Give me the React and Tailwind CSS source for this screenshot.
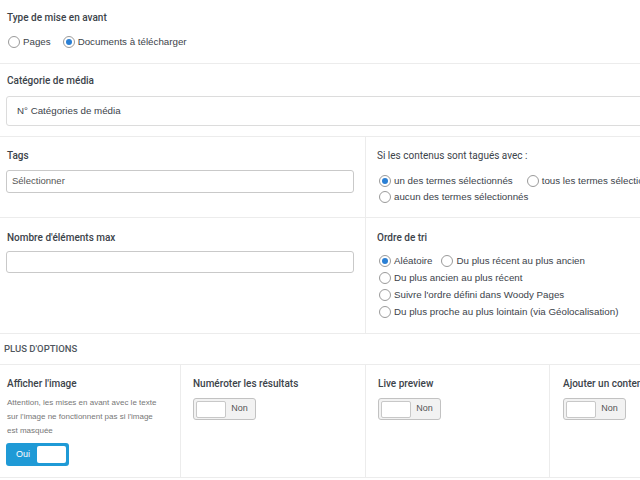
const font = { fontFamily: '"Liberation Sans", Arial, sans-serif' };
const labelFont = { fontFamily: 'Roboto, "Liberation Sans", Arial, sans-serif' };

const Radio = ({ checked, label }) => (
  <label className="flex items-center gap-[3px] text-[9.75px] text-[#3c434a] leading-[14px]">
    <span className="w-[12px] h-[12px] rounded-full border border-[#9a9a9a] bg-white flex items-center justify-center shrink-0">
      {checked && <span className="w-[6px] h-[6px] rounded-full bg-[#2a7fd4]" />}
    </span>
    <span className="whitespace-nowrap">{label}</span>
  </label>
);

const Label = ({ children, className = "" }) => (
  <div
    className={`text-[10px] font-medium text-[#3c434a] leading-[14px] whitespace-nowrap ${className}`}
    style={labelFont}
  >
    {children}
  </div>
);

const ToggleOff = () => (
  <div className="w-[63px] h-[22px] rounded-[3px] border border-[#c2c2c2] bg-[#f2f2f2] flex items-center p-[2px]">
    <div className="w-[30px] h-[17px] bg-white border border-[#c8c8c8] rounded-[2px]" />
    <span className="flex-1 text-center text-[9px] text-[#555]">Non</span>
  </div>
);

const ToggleOn = () => (
  <div className="w-[63px] h-[23px] rounded-[3px] bg-[#1f9ad6] flex items-center p-[3px]">
    <span className="flex-1 text-center text-[9px] text-white">Oui</span>
    <div className="w-[29px] h-[17px] bg-white rounded-[2px]" />
  </div>
);

export default function App() {
  return (
    <div className="w-[640px] h-[480px] overflow-hidden bg-white" style={font}>
      <div className="w-[740px]">
        {/* Type */}
        <div className="h-[64px] px-[7px] pt-[11px] border-b border-[#ececec]">
          <Label>Type de mise en avant</Label>
          <div className="flex gap-[12px] mt-[10px] pl-[1px]">
            <Radio label="Pages" />
            <Radio checked label="Documents à télécharger" />
          </div>
        </div>

        {/* Catégorie */}
        <div className="h-[73px] pl-[6px] pt-[10px] border-b border-[#ececec]">
          <Label className="pl-[1px]">Catégorie de média</Label>
          <div className="mt-[8px] h-[30px] border border-[#dcdcdc] rounded-[3px] flex items-center pl-[10px] text-[9.75px] text-[#3c434a]">
            N° Catégories de média
          </div>
        </div>

        {/* Tags */}
        <div className="flex h-[81px] border-b border-[#ececec]">
          <div className="w-[366px] pl-[6px] pr-[11px] pt-[12px] border-r border-[#ececec]">
            <Label className="pl-[1px]">Tags</Label>
            <div className="mt-[7px] h-[23px] border border-[#c9c9c9] rounded-[3px] flex items-center pl-[5px] text-[9.5px] text-[#555]">
              Sélectionner
            </div>
          </div>
          <div className="flex-1 pl-[11px] pt-[12px]">
            <Label className="font-normal">Si les contenus sont tagués avec :</Label>
            <div className="mt-[11px] pl-[2px] flex flex-col gap-[2px]">
              <div className="flex gap-[14px]">
                <Radio checked label="un des termes sélectionnés" />
                <Radio label="tous les termes sélectionnés" />
              </div>
              <Radio label="aucun des termes sélectionnés" />
            </div>
          </div>
        </div>

        {/* Nombre / Ordre */}
        <div className="flex h-[116px] border-b border-[#ececec]">
          <div className="w-[366px] pl-[6px] pr-[11px] pt-[13px] border-r border-[#ececec]">
            <Label className="pl-[1px]">Nombre d'éléments max</Label>
            <div className="mt-[6px] h-[22px] border border-[#c9c9c9] rounded-[3px]" />
          </div>
          <div className="flex-1 pl-[11px] pt-[13px]">
            <Label>Ordre de tri</Label>
            <div className="mt-[9px] pl-[2px] flex flex-col gap-[3px]">
              <div className="flex gap-[9px]">
                <Radio checked label="Aléatoire" />
                <Radio label="Du plus récent au plus ancien" />
              </div>
              <Radio label="Du plus ancien au plus récent" />
              <Radio label="Suivre l'ordre défini dans Woody Pages" />
              <Radio label="Du plus proche au plus lointain (via Géolocalisation)" />
            </div>
          </div>
        </div>

        {/* Plus d'options */}
        <div className="h-[31px] px-[4px] flex items-center border-b border-[#ececec]">
          <span className="text-[9.5px] font-medium uppercase text-[#50575e]" style={labelFont}>
            Plus d'options
          </span>
        </div>

        <div className="flex h-[113px] border-b border-[#ececec]">
          <div className="w-[181px] pl-[7px] pr-[16px] pt-[12px] border-r border-[#ececec]">
            <Label>Afficher l'image</Label>
            <p className="mt-[5px] text-[8px] leading-[14px] text-[#777]">
              Attention, les mises en avant avec le texte sur l'image ne fonctionnent pas si l'image est masquée
            </p>
            <div className="mt-[5px] -ml-[1px]">
              <ToggleOn />
            </div>
          </div>
          <div className="w-[185px] pl-[12px] pt-[12px] border-r border-[#ececec]">
            <Label>Numéroter les résultats</Label>
            <div className="mt-[7px]">
              <ToggleOff />
            </div>
          </div>
          <div className="w-[184px] pl-[12px] pt-[12px] border-r border-[#ececec]">
            <Label>Live preview</Label>
            <div className="mt-[7px]">
              <ToggleOff />
            </div>
          </div>
          <div className="flex-1 pl-[13px] pt-[12px]">
            <Label>Ajouter un contenu</Label>
            <div className="mt-[7px]">
              <ToggleOff />
            </div>
          </div>
        </div>
      </div>
    </div>
  );
}
